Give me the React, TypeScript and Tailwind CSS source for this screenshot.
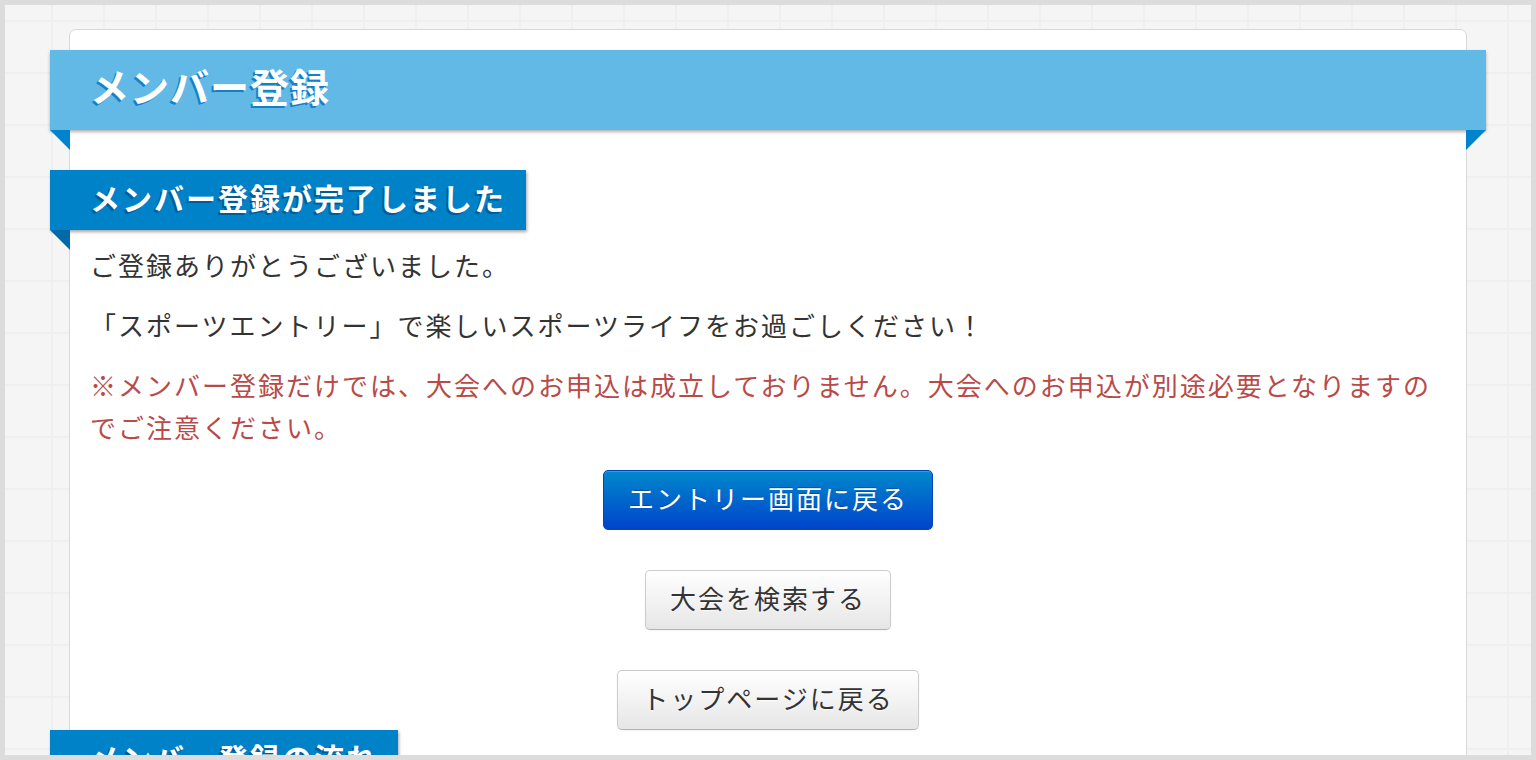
import React from "react";

const jp = { fontFamily: '"Noto Sans CJK JP", "Noto Sans", sans-serif' };

function Fold({ side, color }: { side: "left" | "right"; color: string }) {
  return (
    <svg
      width="20"
      height="20"
      viewBox="0 0 20 20"
      className={side === "left" ? "absolute left-0 top-full" : "absolute right-0 top-full"}
    >
      {side === "left" ? (
        <polygon points="0,0 20,0 20,20" fill={color} />
      ) : (
        <polygon points="0,0 20,0 0,20" fill={color} />
      )}
    </svg>
  );
}

export default function App() {
  return (
    <div
      style={jp}
      className="h-[760px] w-full overflow-hidden border-[5px] border-[#dcdcdc] bg-[#f5f5f5] bg-[linear-gradient(90deg,#efefef_2px,transparent_2px),linear-gradient(#efefef_2px,transparent_2px)] bg-[size:52px_52px] bg-[position:46px_15px]"
    >
      <div className="mx-[64px] mt-[24px] rounded-t-[7px] border border-[#d9d9d9] bg-white px-[20px] pt-[20px] pb-10">
        {/* main header */}
        <div className="relative -mx-[40px] flex h-[80px] items-center bg-[#63b9e6] pb-[10px] pl-[40px] shadow-[0_2px_3px_rgba(0,0,0,0.3)]">
          <h1 className="text-[39px] font-bold leading-none tracking-[1px] text-white [text-shadow:-2px_2px_0_#1380c8]">
            メンバー登録
          </h1>
          <Fold side="left" color="#0082cc" />
          <Fold side="right" color="#0082cc" />
        </div>

        {/* sub header */}
        <div className="relative -ml-[40px] mt-[40px] inline-flex h-[60px] items-center bg-[#0082c9] pb-[6px] pl-[40px] pr-[20px] shadow-[1px_2px_3px_rgba(0,0,0,0.35)]">
          <h2 className="text-[30px] font-bold leading-none tracking-[2px] text-white [text-shadow:-2px_2px_0_#005c99]">
            メンバー登録が完了しました
          </h2>
          <Fold side="left" color="#006aa8" />
        </div>

        <div className="mt-[14px] text-[26px] leading-[42px] tracking-[2px] text-[#333333]">
          <p>ご登録ありがとうございました。</p>
          <p className="mt-[18px]">「スポーツエントリー」で楽しいスポーツライフをお過ごしください！</p>
          <p className="mt-[18px] text-[#b94a48]">
            ※メンバー登録だけでは、大会へのお申込は成立しておりません。大会へのお申込が別途必要となりますのでご注意ください。
          </p>
        </div>

        <div className="mt-[22px] flex flex-col items-center gap-[40px]">
          <button className="h-[60px] rounded-[5px] border border-[#0044bb] bg-[linear-gradient(#0088cc,#0044cc)] px-[24px] pb-[5px] text-[26px] tracking-[2px] text-white [text-shadow:0_-1px_0_rgba(0,0,0,0.25)] shadow-[inset_0_1px_0_rgba(255,255,255,0.2)]">
            エントリー画面に戻る
          </button>
          <button className="h-[60px] rounded-[5px] border border-[#cccccc] border-b-[#b3b3b3] bg-[linear-gradient(#ffffff,#e6e6e6)] px-[24px] pb-[5px] text-[26px] tracking-[2px] text-[#333333] [text-shadow:0_1px_1px_rgba(255,255,255,0.75)] shadow-[0_1px_2px_rgba(0,0,0,0.05)]">
            大会を検索する
          </button>
          <button className="h-[60px] rounded-[5px] border border-[#cccccc] border-b-[#b3b3b3] bg-[linear-gradient(#ffffff,#e6e6e6)] px-[24px] pb-[5px] text-[26px] tracking-[2px] text-[#333333] [text-shadow:0_1px_1px_rgba(255,255,255,0.75)] shadow-[0_1px_2px_rgba(0,0,0,0.05)]">
            トップページに戻る
          </button>
        </div>

        <div className="relative -ml-[40px] mt-0 inline-flex h-[60px] items-center bg-[#0082c9] pb-[6px] pl-[40px] pr-[20px] shadow-[1px_2px_3px_rgba(0,0,0,0.35)]">
          <h2 className="text-[30px] font-bold leading-none tracking-[2px] text-white [text-shadow:-2px_2px_0_#005c99]">
            メンバー登録の流れ
          </h2>
        </div>
      </div>
    </div>
  );
}
